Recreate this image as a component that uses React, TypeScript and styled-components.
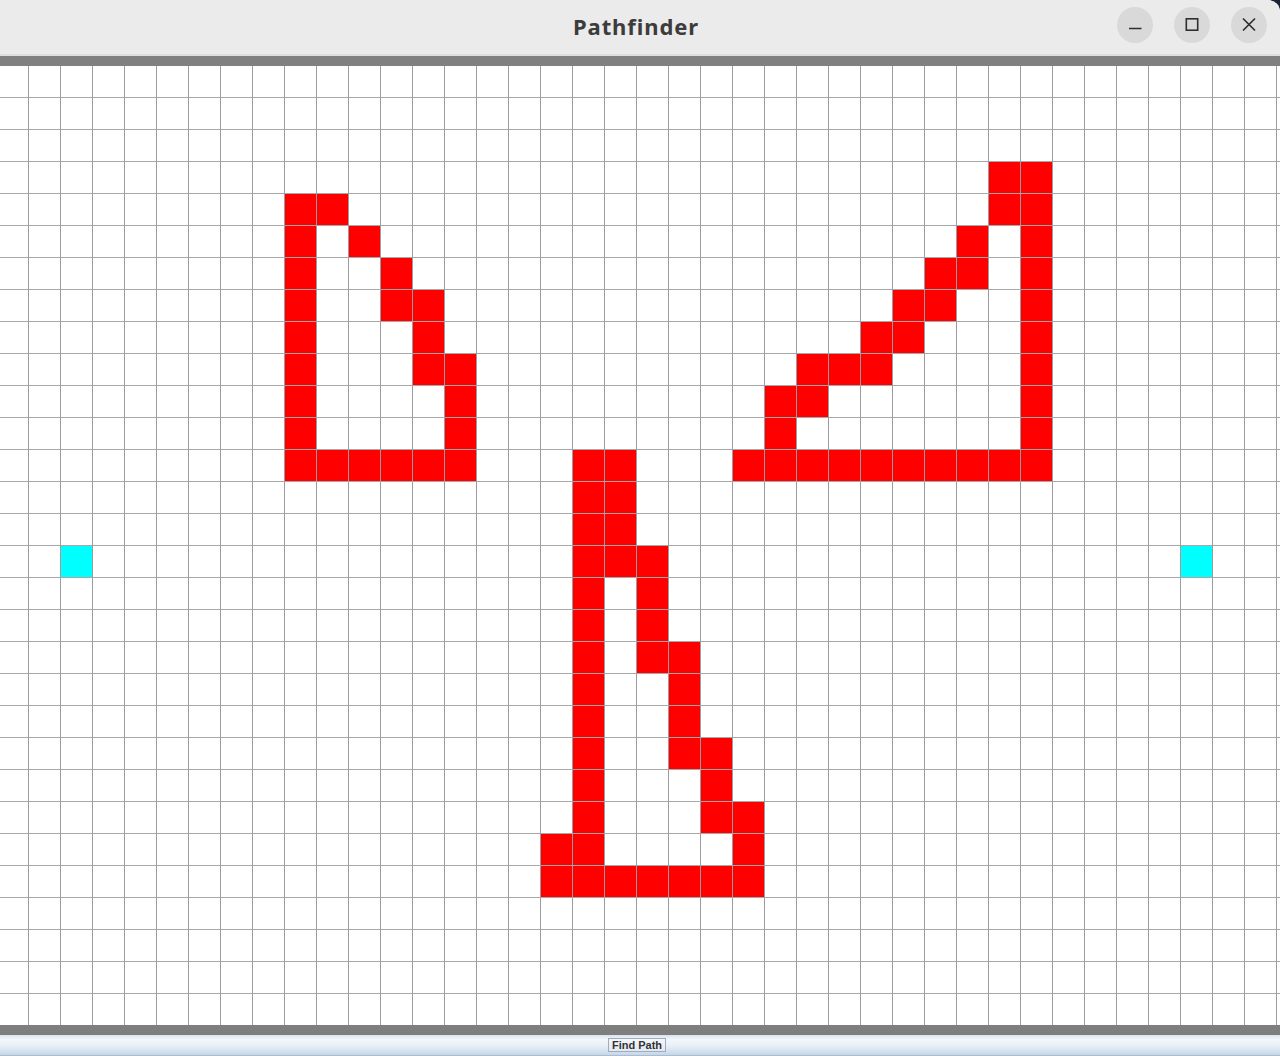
import React from "react";
import styled, { createGlobalStyle } from "styled-components";

const GlobalStyle = createGlobalStyle`
  html, body {
    margin: 0;
    padding: 0;
    background: #1d2233;
    overflow: hidden;
  }
  #root {
    width: 1280px;
    height: 1056px;
  }
`;

const ROWS = 30;
const COLS = 41;
const CELL = 32;

type CellKind = "empty" | "wall" | "endpoint";

const wallList: Array<[number, number[]]> = [
  // shape 1 (left)
  [4, [9, 10]],
  [5, [9, 11]],
  [6, [9, 12]],
  [7, [9, 12, 13]],
  [8, [9, 13]],
  [9, [9, 13, 14]],
  [10, [9, 14]],
  [11, [9, 14]],
  [12, [9, 10, 11, 12, 13, 14]],
  // shape 2 (right)
  [3, [31, 32]],
  [4, [31, 32]],
  [5, [30, 32]],
  [6, [29, 30, 32]],
  [7, [28, 29, 32]],
  [8, [27, 28, 32]],
  [9, [25, 26, 27, 32]],
  [10, [24, 25, 32]],
  [11, [24, 32]],
  [12, [23, 24, 25, 26, 27, 28, 29, 30, 31, 32]],
  // shape 3 (bottom)
  [12, [18, 19]],
  [13, [18, 19]],
  [14, [18, 19]],
  [15, [18, 19, 20]],
  [16, [18, 20]],
  [17, [18, 20]],
  [18, [18, 20, 21]],
  [19, [18, 21]],
  [20, [18, 21]],
  [21, [18, 21, 22]],
  [22, [18, 22]],
  [23, [18, 22, 23]],
  [24, [17, 18, 23]],
  [25, [17, 18, 19, 20, 21, 22, 23]],
];

const walls = new Set<string>();
wallList.forEach(([r, cs]) => cs.forEach((c) => walls.add(`${r},${c}`)));
const endpoints = new Set<string>(["15,2", "15,37"]);

const kindOf = (r: number, c: number): CellKind => {
  const k = `${r},${c}`;
  if (endpoints.has(k)) return "endpoint";
  if (walls.has(k)) return "wall";
  return "empty";
};

const cellColors: Record<CellKind, string> = {
  empty: "#ffffff",
  wall: "#ff0000",
  endpoint: "#00ffff",
};

const Window = styled.div`
  width: 1280px;
  height: 1056px;
  display: flex;
  flex-direction: column;
  background: #ebebeb;
  border-top-right-radius: 12px;
  overflow: hidden;
`;

const TitleBar = styled.div`
  height: 56px;
  flex: 0 0 56px;
  box-sizing: border-box;
  border-bottom: 2px solid #dedede;
  background: #ebebeb;
  display: grid;
  grid-template-columns: 1fr auto 1fr;
  align-items: center;
`;

const Title = styled.div`
  grid-column: 2;
  font-family: "Noto Sans", "DejaVu Sans", sans-serif;
  font-weight: 700;
  font-size: 22px;
  color: #3c3c3c;
  padding-right: 8px;
  padding-bottom: 2px;
  letter-spacing: 0.9px;
`;

const Controls = styled.div`
  grid-column: 3;
  justify-self: end;
  display: flex;
  gap: 21px;
  padding-right: 13px;
  padding-bottom: 4px;
`;

const CircleButton = styled.div`
  width: 36px;
  height: 36px;
  border-radius: 50%;
  background: #d9d9d9;
  display: flex;
  align-items: center;
  justify-content: center;
`;

const GridFrame = styled.div`
  flex: 0 0 auto;
  height: 959px;
  border-top: 10px solid #808080;
  border-bottom: 10px solid #7e7e7e;
  background: #ffffff;
  overflow: hidden;
`;

const Grid = styled.div`
  margin-left: -4px;
  margin-top: -1px;
  display: grid;
  grid-template-columns: repeat(${COLS}, ${CELL}px);
  grid-auto-rows: ${CELL}px;
  width: ${COLS * CELL}px;
`;

const Cell = styled.div<{ $kind: CellKind }>`
  box-sizing: border-box;
  border-left: 1px solid #9c9c9c;
  border-top: 1px solid #a8a8a8;
  background: ${(p) => cellColors[p.$kind]};
`;

const ButtonBar = styled.div`
  flex: 1 1 auto;
  box-sizing: border-box;
  border-bottom: 1px solid #a9bdd2;
  background: linear-gradient(
    to bottom,
    #d9e3ee 0%,
    #f3f7fb 22%,
    #e8eff7 55%,
    #c6d6e7 100%
  );
  display: flex;
  justify-content: center;
  align-items: flex-start;
  padding-top: 3px;
  padding-right: 6px;
`;

const FindButton = styled.button`
  margin: 0;
  height: 14px;
  width: 58px;
  padding: 0;
  box-sizing: border-box;
  border: 1px solid #a3abb8;
  background: linear-gradient(to bottom, #f4f7fb, #e1e9f2);
  font-family: "Liberation Sans", "DejaVu Sans", sans-serif;
  font-weight: 700;
  font-size: 11px;
  line-height: 12px;
  color: #333333;
  cursor: pointer;
`;

const iconStroke = "#2f2f2f";

export default function App() {
  const cells: React.ReactNode[] = [];
  for (let r = 0; r < ROWS; r++) {
    for (let c = 0; c < COLS; c++) {
      cells.push(<Cell key={`${r}-${c}`} $kind={kindOf(r, c)} />);
    }
  }

  return (
    <>
      <GlobalStyle />
      <Window>
        <TitleBar>
          <Title>Pathfinder</Title>
          <Controls>
            <CircleButton aria-label="Minimize">
              <svg width="16" height="16" viewBox="0 0 16 16">
                <line x1="2" y1="11.5" x2="14.5" y2="11.5" stroke={iconStroke} strokeWidth="1.6" />
              </svg>
            </CircleButton>
            <CircleButton aria-label="Maximize">
              <svg width="16" height="16" viewBox="0 0 16 16">
                <rect x="2.3" y="1.8" width="11.4" height="11.4" fill="none" stroke={iconStroke} strokeWidth="1.6" />
              </svg>
            </CircleButton>
            <CircleButton aria-label="Close">
              <svg width="16" height="16" viewBox="0 0 16 16">
                <path d="M2 1.5 L14 13.5 M14 1.5 L2 13.5" stroke={iconStroke} strokeWidth="1.7" fill="none" />
              </svg>
            </CircleButton>
          </Controls>
        </TitleBar>
        <GridFrame>
          <Grid>{cells}</Grid>
        </GridFrame>
        <ButtonBar>
          <FindButton>Find Path</FindButton>
        </ButtonBar>
      </Window>
    </>
  );
}
